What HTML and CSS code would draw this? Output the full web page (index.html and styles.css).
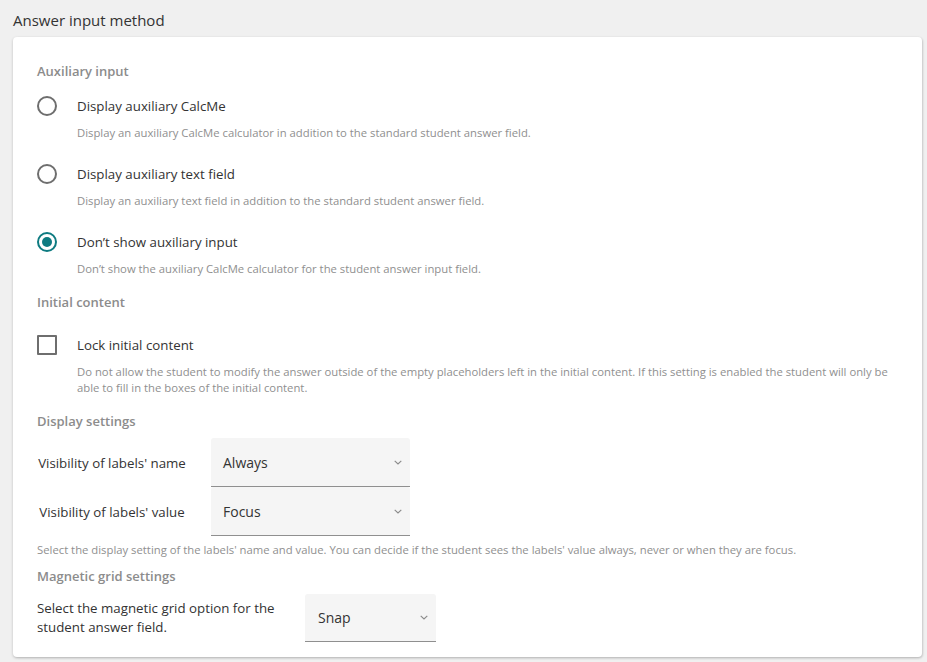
FILE: index.html
```html
<!DOCTYPE html>
<html lang="en">
<head>
<meta charset="utf-8">
<title>Answer input method</title>
<link rel="stylesheet" href="styles.css">
</head>
<body>
<div class="page">
  <h1 class="title">Answer input method</h1>
  <div class="card">
    <h2 class="heading">Auxiliary input</h2>

    <div class="option">
      <div class="control-row">
        <span class="radio"></span>
        <span class="label">Display auxiliary CalcMe</span>
      </div>
      <p class="desc">Display an auxiliary CalcMe calculator in addition to the standard student answer field.</p>
    </div>

    <div class="option">
      <div class="control-row">
        <span class="radio"></span>
        <span class="label">Display auxiliary text field</span>
      </div>
      <p class="desc">Display an auxiliary text field in addition to the standard student answer field.</p>
    </div>

    <div class="option">
      <div class="control-row">
        <span class="radio checked"></span>
        <span class="label">Don’t show auxiliary input</span>
      </div>
      <p class="desc">Don’t show the auxiliary CalcMe calculator for the student answer input field.</p>
    </div>

    <h2 class="heading heading-2">Initial content</h2>

    <div class="option option-check">
      <div class="control-row">
        <span class="checkbox"></span>
        <span class="label">Lock initial content</span>
      </div>
      <p class="desc">Do not allow the student to modify the answer outside of the empty placeholders left in the initial content. If this setting is enabled the student will only be able to fill in the boxes of the initial content.</p>
    </div>

    <h2 class="heading heading-3">Display settings</h2>

    <div class="select-group">
      <div class="select-row">
        <span class="select-label">Visibility of labels' name</span>
        <div class="select">
          <span>Always</span>
          <svg class="chev" width="8" height="5" viewBox="0 0 8 5"><path d="M0.7 0.8 L4 4 L7.3 0.8" fill="none" stroke="#8a8a8a" stroke-width="1.1"/></svg>
        </div>
      </div>
      <div class="select-row">
        <span class="select-label">Visibility of labels' value</span>
        <div class="select">
          <span>Focus</span>
          <svg class="chev" width="8" height="5" viewBox="0 0 8 5"><path d="M0.7 0.8 L4 4 L7.3 0.8" fill="none" stroke="#8a8a8a" stroke-width="1.1"/></svg>
        </div>
      </div>
    </div>
    <p class="desc desc-plain">Select the display setting of the labels' name and value. You can decide if the student sees the labels' value always, never or when they are focus.</p>

    <h2 class="heading heading-4">Magnetic grid settings</h2>

    <div class="grid-row">
      <span class="grid-label">Select the magnetic grid option for the student answer field.</span>
      <div class="select select-small">
        <span>Snap</span>
        <svg class="chev" width="8" height="5" viewBox="0 0 8 5"><path d="M0.7 0.8 L4 4 L7.3 0.8" fill="none" stroke="#8a8a8a" stroke-width="1.1"/></svg>
      </div>
    </div>
  </div>
</div>
</body>
</html>
```

FILE: styles.css
```css
* { box-sizing: border-box; }

html, body {
  margin: 0;
  padding: 0;
  background: #f0f0f0;
}

body {
  font-family: "Open Sans", "Noto Sans", "Liberation Sans", sans-serif;
  color: #333333;
}

.page {
  padding: 0 5px 0 13px;
  width: 927px;
  height: 662px;
}

.title {
  margin: 0;
  padding-top: 9px;
  height: 37px;
  font-size: 15px;
  line-height: 22px;
  font-weight: 400;
  color: #333333;
}

.card {
  width: 909px;
  height: 620px;
  background: #ffffff;
  border-radius: 4px;
  box-shadow: 0 1px 3px rgba(0, 0, 0, 0.2), 1px 1px 2px rgba(0, 0, 0, 0.08);
  padding: 24px 24px 0 24px;
}

.heading {
  margin: 0;
  font-size: 13px;
  line-height: 20px;
  height: 20px;
  font-weight: 600;
  color: #8c8c8c;
}

.heading-2 { margin-top: 15px; }
.heading-3 { margin-top: 15px; }
.heading-4 { margin-top: 8px; }

.option { margin-top: 15px; }
.option + .option { margin-top: 23px; }
.option-check { margin-top: 23px; }

.control-row {
  display: flex;
  align-items: center;
  height: 20px;
}

.radio {
  width: 20px;
  height: 20px;
  border-radius: 50%;
  border: 2px solid #6e6e6e;
  flex: 0 0 auto;
  position: relative;
}

.radio.checked {
  border-color: #0e7b81;
}

.radio.checked::after {
  content: "";
  position: absolute;
  left: 3px;
  top: 3px;
  width: 10px;
  height: 10px;
  border-radius: 50%;
  background: #0e7b81;
}

.checkbox {
  width: 20px;
  height: 20px;
  border: 2px solid #6e6e6e;
  border-radius: 1px;
  flex: 0 0 auto;
}

.label {
  margin-left: 20px;
  font-size: 13.3px;
  line-height: 20px;
  color: #333333;
}

.desc {
  margin: 9px 0 0 40px;
  font-size: 11.3px;
  line-height: 16px;
  color: #8f8f8f;
}

.desc-plain {
  margin: 6px 0 0 0;
}

.select-group {
  margin-top: 7px;
}

.select-row {
  display: flex;
  align-items: center;
}

.select-label {
  width: 150px;
  text-align: center;
  font-size: 13.3px;
  white-space: nowrap;
  color: #333333;
  margin-right: 24px;
}

.select {
  width: 199px;
  height: 49px;
  background: #f5f5f5;
  border-bottom: 1px solid #8f8f8f;
  border-radius: 3px 3px 0 0;
  display: flex;
  align-items: center;
  justify-content: space-between;
  padding: 0 8px 0 12px;
  font-size: 14px;
  color: #333333;
}

.chev { display: block; }

.grid-row {
  display: flex;
  align-items: center;
  margin-top: 8px;
}

.grid-label {
  width: 244px;
  margin-right: 24px;
  font-size: 13.3px;
  line-height: 19px;
  color: #333333;
}

.select-small {
  width: 131px;
  height: 48px;
  padding-left: 13px;
}
```
